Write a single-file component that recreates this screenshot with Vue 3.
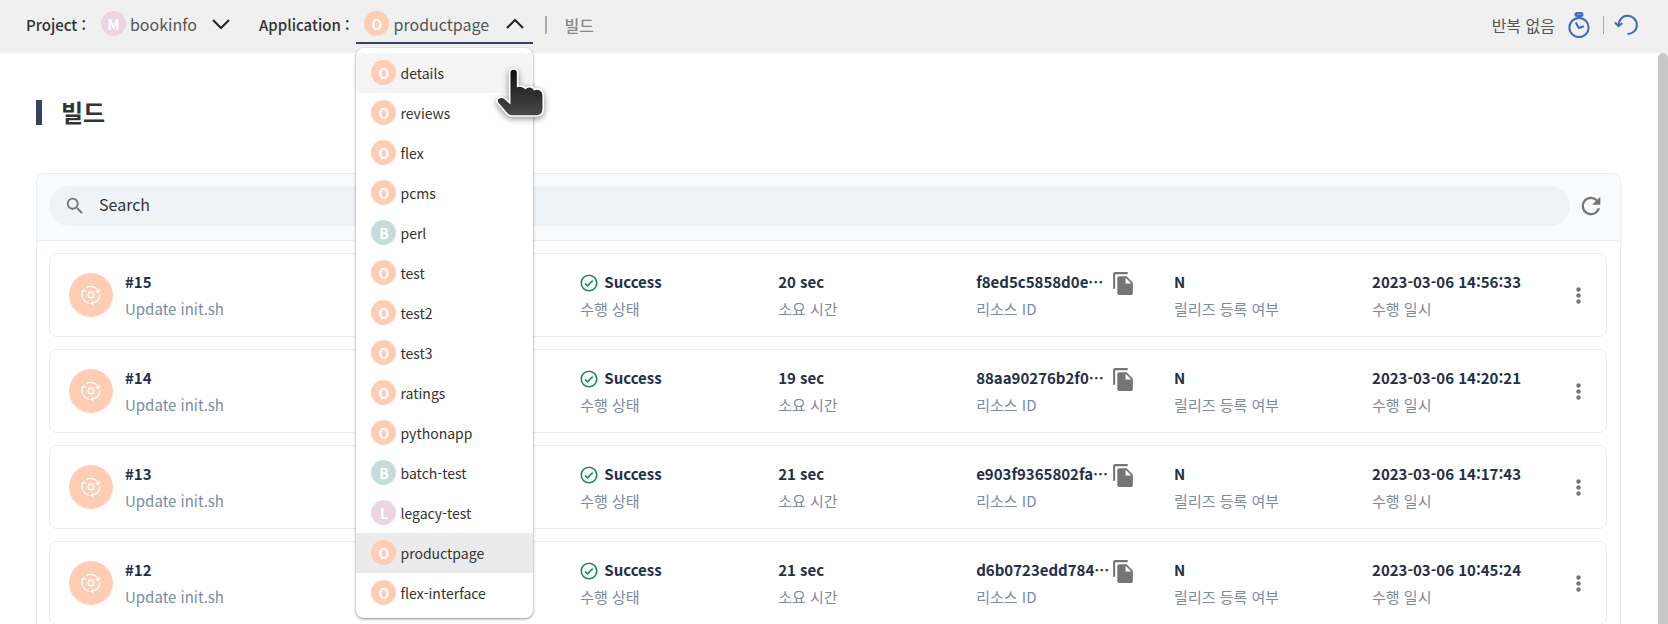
<script setup>
import { ref } from 'vue'

const keyword = ref('')

const applications = [
  { name: 'details', type: 'O', state: 'hover' },
  { name: 'reviews', type: 'O' },
  { name: 'flex', type: 'O' },
  { name: 'pcms', type: 'O' },
  { name: 'perl', type: 'B' },
  { name: 'test', type: 'O' },
  { name: 'test2', type: 'O' },
  { name: 'test3', type: 'O' },
  { name: 'ratings', type: 'O' },
  { name: 'pythonapp', type: 'O' },
  { name: 'batch-test', type: 'B' },
  { name: 'legacy-test', type: 'L' },
  { name: 'productpage', type: 'O', state: 'selected' },
  { name: 'flex-interface', type: 'O' },
]

const builds = [
  { no: 15, message: 'Update init.sh', seconds: 20, resource: 'f8ed5c5858d0e…', release: 'N', date: '2023-03-06 14:56:33' },
  { no: 14, message: 'Update init.sh', seconds: 19, resource: '88aa90276b2f0…', release: 'N', date: '2023-03-06 14:20:21' },
  { no: 13, message: 'Update init.sh', seconds: 21, resource: 'e903f9365802fa…', release: 'N', date: '2023-03-06 14:17:43' },
  { no: 12, message: 'Update init.sh', seconds: 21, resource: 'd6b0723edd784…', release: 'N', date: '2023-03-06 10:45:24' },
]
</script>

<template>
  <div class="page" lang="ko">
    <header class="topbar">
      <span id="project-label" class="field-label">Project :</span>
      <button class="picker" type="button" aria-labelledby="project-label project-value" aria-haspopup="listbox">
        <span class="badge type-m">M</span>
        <span id="project-value" class="picker-value">bookinfo</span>
        <svg class="chevron" viewBox="0 0 18 12" aria-hidden="true"><path d="M1 2l8 8 8-8" /></svg>
      </button>

      <span id="app-label" class="field-label app-label">Application :</span>
      <div class="picker-wrap">
        <button class="picker open" type="button" aria-labelledby="app-label app-value" aria-haspopup="listbox" aria-expanded="true">
          <span class="badge type-o">O</span>
          <span id="app-value" class="picker-value">productpage</span>
          <svg class="chevron" viewBox="0 0 18 12" aria-hidden="true"><path d="M1 10l8-8 8 8" /></svg>
        </button>
        <ul class="menu" role="listbox" aria-labelledby="app-label">
          <li
            v-for="app in applications"
            :key="app.name"
            class="option"
            :class="app.state"
            role="option"
            :aria-selected="app.state === 'selected'"
          >
            <span class="badge" :class="'type-' + app.type.toLowerCase()">{{ app.type }}</span>
            <span>{{ app.name }}</span>
          </li>
        </ul>
        <svg class="pointer" viewBox="0 0 56 60" aria-hidden="true">
          <defs>
            <linearGradient id="hand" x1="0" y1="0" x2="0" y2="1">
              <stop offset="0" stop-color="#111" />
              <stop offset="1" stop-color="#484848" />
            </linearGradient>
          </defs>
          <path
            d="M20 8.500Q20 5.500 23 5.500T26 8.500V22Q27.500 21 30 21.500Q33 22 34 24Q36 21.500 39 22.200Q41.500 22.800 42 25Q44 23.500 47 24.500Q50 26 50 30V42Q50 48 44 48H21Q19 48 17.500 46.500L9 36.500Q7 34 9.500 32.300Q12 31 14.500 33L20 38Z"
          />
        </svg>
      </div>

      <span class="divider"></span>
      <span class="crumb">빌드</span>

      <div class="tools">
        <span class="repeat">반복 없음</span>
        <button class="tool" type="button" aria-label="반복 설정">
          <svg class="timer" viewBox="0 0 22 26" aria-hidden="true">
            <rect x="7.500" y="1" width="7" height="3" rx="1.500" fill="#7f9fd6" />
            <path d="M11 4v2" />
            <circle cx="11" cy="15.500" r="9.600" />
            <path d="M7.800 10.500l3 5.500 5-1.800" />
          </svg>
        </button>
        <span class="divider thin"></span>
        <button class="tool" type="button" aria-label="새로고침">
          <svg class="undo" viewBox="0 0 24 22" aria-hidden="true">
            <path d="M4.700 12A9.100 9.100 0 1 1 13.500 20" />
            <path d="M1 8.500l3.500 3.700L8.300 9" />
          </svg>
        </button>
      </div>
    </header>

    <div class="body">
      <main class="content">
        <h1 class="title">빌드</h1>

        <section class="panel">
          <div class="searchbar">
            <label class="search">
              <svg viewBox="0 0 24 24" aria-hidden="true">
                <path d="M15.500 14h-.79l-.28-.27A6.471 6.471 0 0 0 16 9.500 6.500 6.500 0 1 0 9.500 16c1.610 0 3.090-.59 4.230-1.570l.27.28v.79l5 4.990L20.490 19l-4.990-5zm-6 0C7.010 14 5 11.990 5 9.500S7.010 5 9.500 5 14 7.010 14 9.500 11.990 14 9.500 14z" />
              </svg>
              <input v-model="keyword" type="text" placeholder="Search" aria-label="Search" />
            </label>
            <button class="refresh" type="button" aria-label="Refresh">
              <svg viewBox="0 0 24 24" aria-hidden="true">
                <path d="M17.650 6.350A7.958 7.958 0 0 0 12 4c-4.420 0-7.990 3.580-7.990 8s3.570 8 7.990 8c3.730 0 6.840-2.550 7.730-6h-2.080A5.990 5.990 0 0 1 12 18c-3.310 0-6-2.690-6-6s2.690-6 6-6c1.660 0 3.140.69 4.220 1.780L13 11h7V4l-2.350 2.350z" />
              </svg>
            </button>
          </div>

          <ul class="builds">
            <li v-for="build in builds" :key="build.no" class="build">
              <span class="build-icon">
                <svg viewBox="0 0 20 20" aria-hidden="true">
                  <path d="M5.500 2.700A8.500 8.500 0 0 1 17.500 6.200M18.400 9A8.500 8.500 0 0 1 12.500 18.100M8 18.300A8.500 8.500 0 0 1 2 6" />
                  <path d="M18.600 3.800l-.6 3.400-3.200-.6M12.700 20.200l-2.300-2 2.300-2.200M.4 7.300L2.500 4.800l2.500 2" />
                  <circle cx="10" cy="10" r="2.500" />
                  <path d="M10 5.800v1.700M10 12.500v1.700M5.800 10h1.700M12.500 10h1.700M7 7l1.200 1.200M11.800 11.800L13 13M13 7l-1.200 1.200M8.200 11.800L7 13" />
                </svg>
              </span>
              <div class="cell">
                <strong>#{{ build.no }}</strong>
                <span class="sub">{{ build.message }}</span>
              </div>
              <div class="cell">
                <strong class="status">
                  <svg viewBox="0 0 18 18" aria-hidden="true">
                    <circle cx="9" cy="9" r="7.800" />
                    <path d="M5 9.300l2.700 2.500 5-5.300" />
                  </svg>
                  Success
                </strong>
                <span class="sub">수행 상태</span>
              </div>
              <div class="cell">
                <strong>{{ build.seconds }} sec</strong>
                <span class="sub">소요 시간</span>
              </div>
              <div class="cell">
                <strong class="resource">
                  <span class="hash">{{ build.resource }}</span>
                  <button class="copy" type="button" aria-label="Copy">
                    <svg viewBox="0 0 24 24" aria-hidden="true">
                      <path d="M16 1H4c-1.100 0-2 .9-2 2v14h2V3h12V1zm-1 4l6 6v10c0 1.100-.9 2-2 2H7.990C6.890 23 6 22.100 6 21l.01-14c0-1.100.89-2 1.990-2h7zm-1 7h5.500L14 6.500V12z" />
                    </svg>
                  </button>
                </strong>
                <span class="sub">리소스 ID</span>
              </div>
              <div class="cell">
                <strong>{{ build.release }}</strong>
                <span class="sub">릴리즈 등록 여부</span>
              </div>
              <div class="cell">
                <strong>{{ build.date }}</strong>
                <span class="sub">수행 일시</span>
              </div>
              <button class="more" type="button" aria-label="More">
                <svg viewBox="0 0 5 17" aria-hidden="true">
                  <circle cx="2.500" cy="2.500" r="2.200" />
                  <circle cx="2.500" cy="8.500" r="2.200" />
                  <circle cx="2.500" cy="14.500" r="2.200" />
                </svg>
              </button>
            </li>
          </ul>
        </section>
      </main>
      <div class="scroll-thumb"></div>
    </div>
  </div>
</template>

<style>
body {
  margin: 0;
}
</style>

<style scoped>
* {
  box-sizing: border-box;
}

.page {
  display: flex;
  flex-direction: column;
  height: 100vh;
  overflow: hidden;
  background: #fff;
  color: #333;
  font-family: "Noto Sans CJK KR", sans-serif;
  font-size: 15px;
}

button {
  display: flex;
  align-items: center;
  margin: 0;
  padding: 0;
  border: 0;
  background: none;
  color: inherit;
  font: inherit;
}

ul {
  margin: 0;
  padding: 0;
  list-style: none;
}

svg {
  display: block;
  flex: none;
}

/* Top bar */
.topbar {
  position: relative;
  z-index: 1;
  display: flex;
  flex: none;
  align-items: center;
  height: 53px;
  padding: 0 30px 0 26px;
  background: #f0f0f0;
}

.field-label {
  margin-bottom: 4px;
  font-weight: 500;
  line-height: 24px;
}

.app-label {
  margin-left: 20px;
}

.picker {
  height: 38px;
  margin: 0 0 4px 7px;
  padding: 0 9px 0 8px;
  border-bottom: 2px solid transparent;
}

.picker-wrap {
  position: relative;
}

.picker.open {
  min-width: 177px;
  border-bottom-color: #36425f;
}

.badge {
  display: flex;
  flex: none;
  align-items: center;
  justify-content: center;
  width: 25px;
  height: 25px;
  border-radius: 50%;
  color: #fff;
  font-size: 14px;
  font-weight: 700;
  line-height: 24px;
}

.type-o {
  background: #ffccb6;
}

.type-b {
  background: #c6dbda;
}

.type-m,
.type-l {
  background: #ecd5e3;
}

.picker-value {
  flex: 1;
  margin: 0 15px 0 4px;
  color: #555;
  font-size: 16px;
  line-height: 24px;
  text-align: left;
}

.chevron {
  width: 18px;
  height: 12px;
  fill: none;
  stroke: #222;
  stroke-width: 2;
}

.menu {
  position: absolute;
  top: 42px;
  left: 7px;
  right: 0;
  padding: 5px 0;
  border-radius: 8px;
  background: #fff;
  box-shadow: 0 1px 3px rgba(0, 0, 0, 0.45);
}

.option {
  display: flex;
  align-items: center;
  gap: 4px;
  height: 40px;
  padding: 0 15px;
  font-size: 14px;
  white-space: nowrap;
}

.option.hover {
  background: #f5f5f5;
}

.option.selected {
  background: #ebebeb;
}

.pointer {
  position: absolute;
  top: 58px;
  right: -16px;
  width: 60px;
  height: 64px;
  fill: url(#hand);
  stroke: #fff;
  stroke-width: 3;
  paint-order: stroke;
  filter: drop-shadow(0 2px 3px rgba(0, 0, 0, 0.45));
}

.divider {
  width: 2px;
  height: 18px;
  margin-left: 12px;
  margin-bottom: 4px;
  background: #aaa;
}

.divider.thin {
  width: 1px;
  margin: 0 10px 0 13px;
}

.crumb {
  margin: 0 0 4px 17px;
  color: #888;
  font-size: 16px;
  font-weight: 500;
  line-height: 24px;
}

.tools {
  display: flex;
  align-items: center;
  margin: 0 0 3px auto;
}

.repeat {
  margin-right: 13px;
  color: #555;
  font-size: 16px;
  line-height: 24px;
}

.tool svg {
  fill: none;
  stroke: #3f6ab7;
  stroke-width: 2;
}

.timer {
  width: 22px;
  height: 26px;
}

.undo {
  width: 24px;
  height: 22px;
}

/* Content */
.body {
  display: flex;
  flex: 1;
  min-height: 0;
}

.content {
  flex: 1;
  min-width: 0;
  padding: 41px 37px 0 36px;
}

.scroll-thumb {
  width: 10px;
  border-radius: 5px 5px 0 0;
  background: #c8c8c8;
}

.title {
  display: flex;
  align-items: center;
  gap: 19px;
  margin: 0 0 43px;
  font-size: 24px;
  font-weight: 700;
  line-height: 36px;
}

.title::before {
  content: "";
  width: 6px;
  height: 25px;
  background: #36425f;
}

.panel {
  border: 1px solid #e8eef3;
  border-radius: 8px;
}

.searchbar {
  display: flex;
  align-items: center;
  gap: 7px;
  padding: 12px 15px 14px 12px;
  border-bottom: 1px solid #e8eef3;
  border-radius: 8px 8px 0 0;
  background: #fafbfd;
}

.search {
  display: flex;
  flex: 1;
  align-items: center;
  gap: 13px;
  height: 40px;
  padding: 0 15px;
  border-radius: 20px;
  background: #eef3f8;
}

.search svg {
  width: 22px;
  height: 22px;
  fill: #757575;
}

.search input {
  flex: 1;
  min-width: 0;
  padding: 0 0 4px;
  border: 0;
  outline: 0;
  background: none;
  color: #333;
  font: inherit;
  font-size: 16px;
  line-height: 24px;
}

.search input::placeholder {
  color: #333;
  opacity: 1;
}

.refresh svg {
  width: 28px;
  height: 28px;
  fill: #757575;
}

.builds {
  display: flex;
  flex-direction: column;
  gap: 12px;
  padding: 12px 13px 12px 12px;
}

.build {
  display: grid;
  grid-template-columns: 56px minmax(0, 23fr) repeat(5, minmax(0, 10fr)) 16px;
  align-items: center;
  height: 84px;
  padding: 0 20px 0 19px;
  border: 1px solid #e8eef3;
  border-radius: 8px;
}

.build-icon {
  display: flex;
  align-items: center;
  justify-content: center;
  width: 44px;
  height: 44px;
  border-radius: 50%;
  background: #ffccb6;
}

.build-icon svg {
  width: 20px;
  height: 20px;
  fill: none;
  stroke: #fff;
  stroke-width: 1.2;
}

.cell {
  display: flex;
  flex-direction: column;
  gap: 3px;
  line-height: 24px;
  white-space: nowrap;
}

.cell strong {
  height: 24px;
  color: #242f48;
  font-weight: 700;
}

.sub {
  color: #7c8aa3;
}

.status {
  display: flex;
  align-items: center;
  gap: 6px;
}

.status svg {
  width: 18px;
  height: 18px;
  margin-top: 2px;
  fill: none;
  stroke: #178a4c;
  stroke-width: 1.6;
}

.resource {
  display: flex;
  align-items: center;
  gap: 3px;
}

.hash {
  width: 132px;
}

.copy {
  margin-top: 4px;
}

.copy svg {
  width: 25px;
  height: 25px;
  fill: #757575;
}

.more {
  justify-content: center;
  height: 24px;
}

.more svg {
  width: 5px;
  height: 17px;
  fill: #757575;
}
</style>
